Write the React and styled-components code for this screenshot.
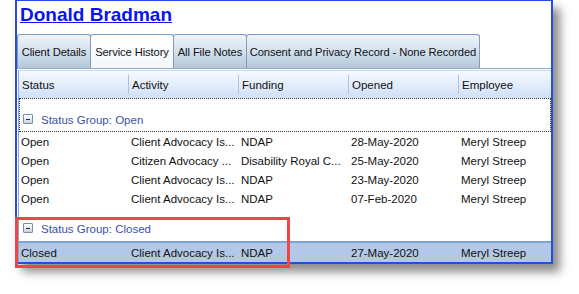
import React from 'react';
import styled, { createGlobalStyle } from 'styled-components';

const GlobalStyle = createGlobalStyle`
  body {
    margin: 0;
    background: #fff;
    font-family: "Liberation Sans", Arial, sans-serif;
  }
`;

const Page = styled.div`
  position: relative;
  width: 579px;
  height: 294px;
  padding-left: 15px;
  box-sizing: border-box;
  overflow: hidden;
`;

const Window = styled.div`
  width: 538px;
  height: 264px;
  box-sizing: border-box;
  border: 2px solid #1f4fe8;
  border-top-width: 1px;
  background: #fff;
  box-shadow: 7px 8px 9px rgba(0,0,0,0.45);
  overflow: hidden;
`;

const Title = styled.a`
  display: block;
  margin: 3px 0 0 3px;
  height: 30px;
  font-size: 19px;
  font-weight: bold;
  line-height: 22px;
  color: #0a14ee;
  text-decoration: underline;
`;

const TabStrip = styled.div`
  display: flex;
  height: 34px;
`;

const Tab = styled.div`
  box-sizing: border-box;
  width: ${p => p.w}px;
  height: 34px;
  display: flex;
  align-items: center;
  justify-content: center;
  white-space: nowrap;
  font-size: 11.2px;
  letter-spacing: -0.1px;
  color: #111;
  border: 1px solid #7f9db9;
  border-bottom: none;
  border-radius: 3px 3px 0 0;
  margin-right: -1px;
  background: ${p => p.active
    ? 'linear-gradient(#ffffff, #f4f7fb)'
    : 'linear-gradient(#eef3f8, #d6e2ee 45%, #b4c7da)'};
`;

const Panel = styled.div`
  border-top: 1px solid #8fa8c0;
  padding-top: 1px;
`;

const Grid = styled.div`
  display: grid;
  grid-template-columns: 110px 110px 110px 110px 1fr;
  margin-left: 1px;
  border-left: 1px solid #8fa8c0;
`;

const HeaderCell = styled.div`
  height: 27px;
  display: flex;
  align-items: center;
  padding-left: 3px;
  font-size: 11.5px;
  color: #111;
  background: linear-gradient(#f6f9fe, #e3edfb 50%, #cfdff6);
  border-top: 1px solid #c9d7e8;
  position: relative;
  &::after {
    content: '';
    display: ${p => p.last ? 'none' : 'block'};
    position: absolute;
    right: 0;
    top: 4px;
    bottom: 4px;
    width: 1px;
    background: #a9c2e2;
  }
`;

const GroupRow = styled.div`
  grid-column: 1 / -1;
  box-sizing: border-box;
  height: ${p => p.h}px;
  display: flex;
  align-items: flex-end;
  padding: 0 0 5px 3px;
  gap: 8px;
  font-size: 11.5px;
  color: #3a4fa6;
  border: 1px dotted ${p => p.focus ? '#333' : 'transparent'};
`;

const Toggle = styled.span`
  box-sizing: border-box;
  width: 10px;
  height: 10px;
  border: 1px solid #7b8ea6;
  border-radius: 1px;
  background: linear-gradient(#ffffff, #c9d3de);
  display: flex;
  align-items: center;
  justify-content: center;
  margin-bottom: 2px;
  &::before {
    content: '';
    width: 4px;
    height: 1px;
    background: #1c2c4c;
  }
`;

const Cell = styled.div`
  height: 19px;
  display: flex;
  align-items: center;
  padding-left: 2px;
  font-size: 11.5px;
  color: #111;
  white-space: nowrap;
  overflow: hidden;
  background: ${p => p.selected ? '#b3c8e8' : 'transparent'};
  border-top: ${p => p.selected ? '2px solid #7fa3d6' : 'none'};
`;

const Highlight = styled.div`
  position: absolute;
  left: 15px;
  top: 217px;
  width: 275px;
  height: 51px;
  box-sizing: border-box;
  border: 3px solid #f2434b;
`;

const tabs = [
  { label: 'Client Details', w: 74 },
  { label: 'Service History', w: 84, active: true },
  { label: 'All File Notes', w: 74 },
  { label: 'Consent and Privacy Record - None Recorded', w: 234 },
];

const columns = ['Status', 'Activity', 'Funding', 'Opened', 'Employee'];

const openRows = [
  ['Open', 'Client Advocacy Is...', 'NDAP', '28-May-2020', 'Meryl Streep'],
  ['Open', 'Citizen Advocacy ...', 'Disability Royal C...', '25-May-2020', 'Meryl Streep'],
  ['Open', 'Client Advocacy Is...', 'NDAP', '23-May-2020', 'Meryl Streep'],
  ['Open', 'Client Advocacy Is...', 'NDAP', '07-Feb-2020', 'Meryl Streep'],
];

const closedRows = [
  ['Closed', 'Client Advocacy Is...', 'NDAP', '27-May-2020', 'Meryl Streep'],
];

const App = () => {
  const renderRows = (rows, selected) =>
    rows.map((row, i) =>
      row.map((val, j) => (
        <Cell key={`${i}-${j}`} selected={selected}>{val}</Cell>
      ))
    );

  return (
    <Page>
      <GlobalStyle />
      <Window>
        <Title>Donald Bradman</Title>
        <TabStrip>
          {tabs.map(t => (
            <Tab key={t.label} w={t.w} active={t.active}>{t.label}</Tab>
          ))}
        </TabStrip>
        <Panel>
          <Grid>
            {columns.map((c, i) => (
              <HeaderCell key={c} last={i === columns.length - 1}>{c}</HeaderCell>
            ))}
            <GroupRow h={34} focus>
              <Toggle />
              Status Group: Open
            </GroupRow>
            {renderRows(openRows, false)}
            <GroupRow h={33}>
              <Toggle />
              Status Group: Closed
            </GroupRow>
            {renderRows(closedRows, true)}
          </Grid>
        </Panel>
      </Window>
      <Highlight />
    </Page>
  );
};

export default App;
